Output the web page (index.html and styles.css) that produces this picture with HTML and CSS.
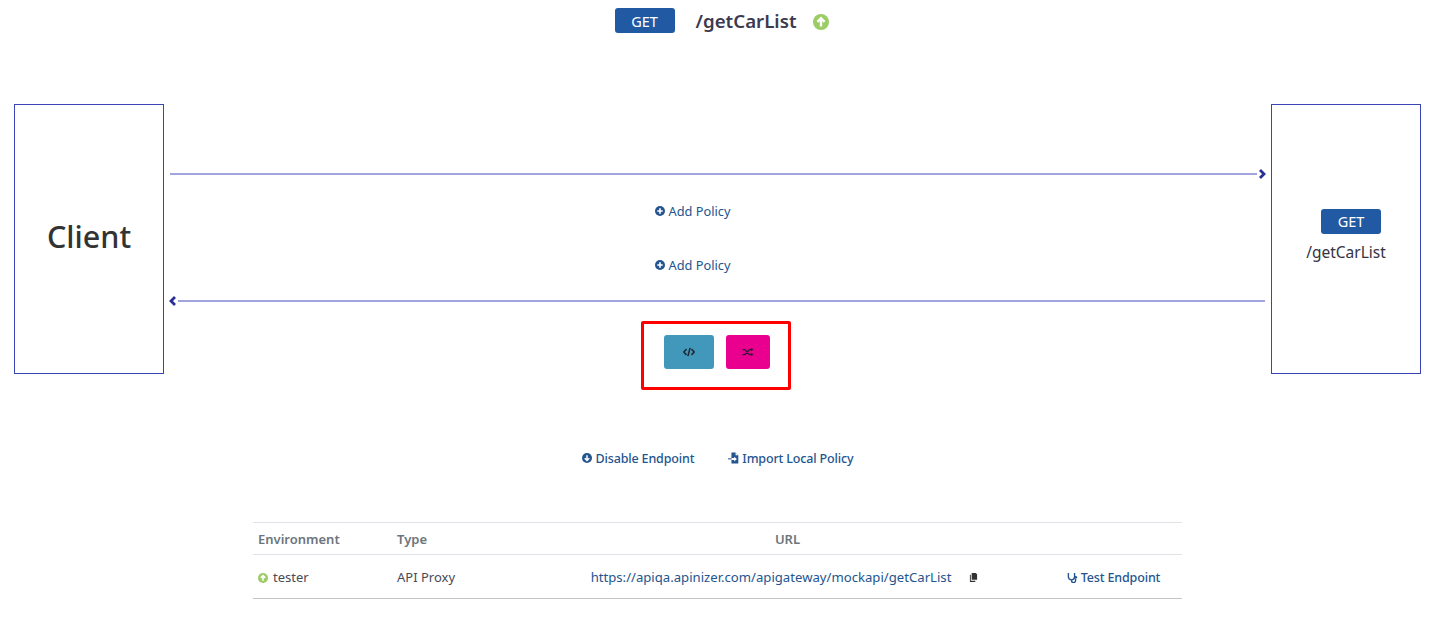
FILE: index.html
```html
<!DOCTYPE html>
<html lang="en">
<head>
<meta charset="utf-8">
<title>/getCarList</title>
<link rel="stylesheet" href="styles.css">
</head>
<body>
<header class="head">
  <span class="badge">GET</span>
  <h1 class="title">/getCarList</h1>
  <svg class="ic-up-lg" viewBox="0 0 16 16"><circle cx="8" cy="8" r="8" fill="#9ccc65"/><path d="M8 12.5V4.2M4.4 7.8 8 4.2l3.6 3.6" fill="none" stroke="#fff" stroke-width="2.4"/></svg>
</header>

<section class="flow">
  <div class="box client">Client</div>
  <div class="mid">
    <div class="line line-req">
      <span class="rule"></span>
      <svg class="chev" viewBox="0 0 8 10"><path d="M2 1l4 4-4 4" fill="none" stroke="#2a2f96" stroke-width="2.8"/></svg>
    </div>
    <a class="add add-first"><svg class="ic" viewBox="0 0 16 16"><circle cx="8" cy="8" r="8" fill="#24558f"/><path d="M8 3.6v8.8M3.6 8h8.8" stroke="#fff" stroke-width="2.6"/></svg>Add Policy</a>
    <a class="add add-second"><svg class="ic" viewBox="0 0 16 16"><circle cx="8" cy="8" r="8" fill="#24558f"/><path d="M8 3.6v8.8M3.6 8h8.8" stroke="#fff" stroke-width="2.6"/></svg>Add Policy</a>
    <div class="line line-res">
      <svg class="chev" viewBox="0 0 8 10"><path d="M6 1 2 5l4 4" fill="none" stroke="#2a2f96" stroke-width="2.8"/></svg>
      <span class="rule"></span>
    </div>
    <div class="mark">
      <button class="tool tool-code"><svg class="tool-ic" viewBox="0 0 14 12"><path d="M4 2.5.9 6 4 9.500M10 2.500 13.100 6 10 9.500M8.300 1 5.700 11" fill="none" stroke="#1f2a33" stroke-width="1.900"/></svg></button>
      <button class="tool tool-shuffle"><svg class="tool-ic" viewBox="0 0 14 12"><path d="M.5 3h2.700l5.600 6h2.700M.5 9h2.700l5.600-6h2.700" fill="none" stroke="#2a1a30" stroke-width="1.500"/><path d="M10.500.8 13.700 3l-3.200 2.200zM10.500 6.800 13.700 9l-3.200 2.200z" fill="#2a1a30"/></svg></button>
    </div>
  </div>
  <div class="box target">
    <span class="badge badge-target">GET</span>
    <span class="target-path">/getCarList</span>
  </div>
</section>

<nav class="actions">
  <a class="act"><svg class="ic" viewBox="0 0 16 16"><circle cx="8" cy="8" r="8" fill="#24558f"/><path d="M8 3.500v8.500M4.400 8.400 8 12l3.600-3.600" fill="none" stroke="#fff" stroke-width="2.400"/></svg>Disable Endpoint</a>
  <a class="act"><svg class="ic ic-file" viewBox="0 0 16 16"><path d="M5 0h6l4 4v12H5v-5h4v2l4-3.500L9 6v2H5z" fill="#24558f"/><path d="M0 8.500h5.500v1.500H0z" fill="#24558f"/><path d="M11 0v4h4z" fill="#fff"/></svg>Import Local Policy</a>
</nav>

<table class="env">
  <thead>
    <tr><th class="c-env">Environment</th><th class="c-type">Type</th><th class="c-url">URL</th><th class="c-test"></th></tr>
  </thead>
  <tbody>
    <tr>
      <td class="c-env"><svg class="ic ic-up" viewBox="0 0 16 16"><circle cx="8" cy="8" r="8" fill="#9ccc65"/><path d="M8 12.500V4.200M4.400 7.800 8 4.200l3.600 3.600" fill="none" stroke="#fff" stroke-width="2.400"/></svg>tester</td>
      <td>API Proxy</td>
      <td class="c-url"><a class="url">https://apiqa.apinizer.com/apigateway/mockapi/getCarList</a><svg class="ic-copy" viewBox="0 0 10 10"><path d="M3 0h4.500L9 1.500V7.500H3z" fill="#333"/><path d="M1 2h1v6.500h5V10H1z" fill="#333"/></svg></td>
      <td class="c-test"><a class="act"><svg class="ic ic-steth" viewBox="0 0 16 16"><path d="M2 1.500v5.500a4.500 4.500 0 0 0 9 0V1.500M6.500 11.500v1a3 3 0 0 0 6 0V9.500" fill="none" stroke="#24558f" stroke-width="2"/><circle cx="12.800" cy="7.500" r="1.800" fill="#24558f"/></svg>Test Endpoint</a></td>
    </tr>
  </tbody>
</table>
</body>
</html>
```
FILE: styles.css
```css
* { box-sizing: border-box; }
html, body { margin: 0; padding: 0; }
body {
  width: 1433px;
  height: 623px;
  overflow: hidden;
  background: #fff;
  color: #343a40;
  font-family: "Noto Sans", "Open Sans", sans-serif;
  font-size: 13px;
}
.head {
  display: flex;
  align-items: center;
  justify-content: center;
  height: 25px;
  margin-top: 8px;
  padding-left: 11px;
}
.badge {
  display: flex;
  align-items: center;
  justify-content: center;
  width: 60px;
  height: 25px;
  background: #2159a3;
  border-radius: 3px;
  color: #fff;
  font-size: 14.5px;
}
.title {
  margin: 0 17px 0 21px;
  font-size: 18.7px;
  font-weight: 600;
  color: #3c3a4e;
}
.ic-up-lg { width: 16px; height: 16px; margin-top: 2px; }
.flow {
  display: flex;
  margin: 71px 12px 0 14px;
  height: 270px;
}
.box {
  flex: none;
  width: 150px;
  height: 270px;
  border: 1px solid #3a46b8;
  display: flex;
  flex-direction: column;
  align-items: center;
  justify-content: center;
}
.client { font-size: 30.5px; font-weight: 500; color: #333; padding-bottom: 6px; }
.target { gap: 7px; padding-bottom: 7px; }
.badge-target { margin-left: 10px; }
.target-path { font-size: 15.5px; color: #35333f; }
.mid {
  flex: 1;
  display: flex;
  flex-direction: column;
  align-items: center;
}
.line { display: flex; align-items: center; align-self: stretch; height: 10px; flex: none; }
.rule { flex: 1; height: 2px; background: #a0a5de; }
.chev { width: 8px; height: 10px; flex: none; }
.line-req { margin: 65px 5px 0 6px; }
.line-req .chev { margin-left: 1px; }
.line-res { margin: 0 6px 0 5px; }
.line-res .chev { margin-right: 1px; }
.add, .act {
  display: inline-flex;
  align-items: center;
  color: #24558f;
  white-space: nowrap;
}
.add { height: 18px; flex: none; font-size: 12.8px; margin-right: 49px; }
.add .ic { margin-right: 3px; }
.add-first { margin-top: 23px; }
.add-second { margin-top: 36px; margin-bottom: 22px; }
.act { font-size: 12.5px; letter-spacing: -0.15px; font-weight: 500; }
.ic { width: 10px; height: 10px; margin-right: 4px; flex: none; }
.mark {
  flex: none;
  display: flex;
  align-items: center;
  justify-content: center;
  gap: 12px;
  width: 150px;
  height: 69px;
  margin: 15px 4px 0 0;
  border: 3px solid #f00;
  border-radius: 2px;
  padding: 0 0 8px 3px;
}
.tool {
  display: flex;
  align-items: center;
  justify-content: center;
  height: 34px;
  padding: 0;
  border: 0;
  border-radius: 3px;
}
.tool-code { width: 50px; background: #4298ba; }
.tool-shuffle { width: 44px; background: #e9008f; }
.tool-ic { width: 12px; height: 10px; }
.actions {
  display: flex;
  justify-content: center;
  gap: 34px;
  margin-top: 75px;
  height: 18px;
  padding-left: 2px;
}
.ic-file { width: 11px; height: 12px; margin-right: 3px; }
.env {
  width: 929px;
  margin: 55px 0 0 253px;
  border-collapse: collapse;
  table-layout: fixed;
  border-top: 1px solid #dee2e6;
  border-bottom: 1px solid #c4c4c4;
}
.env th {
  height: 32px;
  padding: 0 0 0 4px;
  border-bottom: 1px solid #dee2e6;
  text-align: left;
  font-weight: 600;
  color: #6c757d;
}
.env td { height: 44px; padding: 1px 0 0 4px; color: #4a4a55; }
.env .c-env { width: 140px; padding-left: 5px; }
.c-type { width: 133px; }
.env .c-url { width: 521px; text-align: center; padding: 0 0 0 2px; }
.env td.c-url { padding: 1px 4px 0 0; }
.c-test { width: 135px; }
.env td.c-test { text-align: center; padding: 3px 2px 0 0; }
.url { color: #24558f; font-size: 13.15px; }
.ic-copy { width: 9px; height: 9px; margin-left: 18px; }
.ic-up { margin-right: 5px; vertical-align: -1px; }
.ic-steth { width: 11px; height: 11px; margin-right: 3px; }
```
